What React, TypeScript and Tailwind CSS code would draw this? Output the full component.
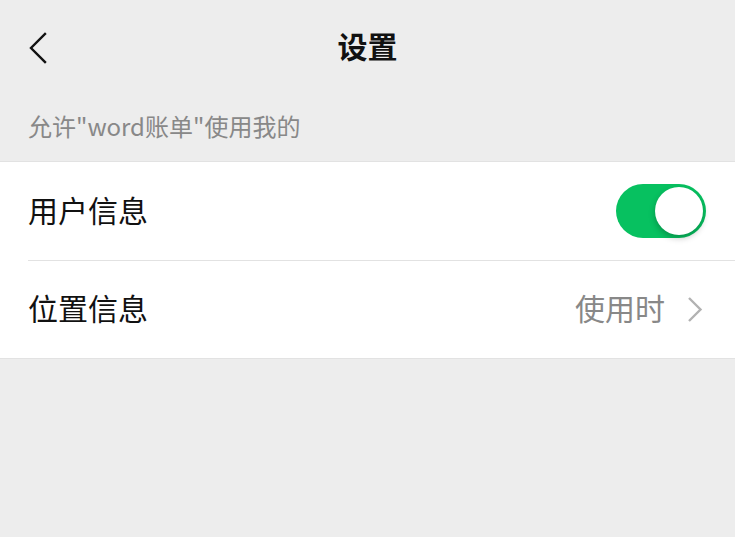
function Toggle() {
  return (
    <div className="relative h-[54px] w-[90px] rounded-full bg-[#07c160]">
      <div className="absolute right-[3px] top-[3px] h-[48px] w-[48px] rounded-full bg-white shadow-[0_3px_6px_rgba(0,0,0,0.25)]" />
    </div>
  );
}

export default function App() {
  return (
    <div className="min-h-[537px] w-full bg-[#ededed] font-['Noto_Sans_CJK_SC',sans-serif]">
      <header className="relative flex h-[96px] items-center justify-center">
        <svg className="absolute left-[28px] top-[32px]" width="22" height="32" viewBox="0 0 22 32" fill="none">
          <path d="M17 2 L3 16 L17 30" stroke="#111" strokeWidth="2.4" strokeLinecap="square" />
        </svg>
        <h1 className="mb-[5px] text-[30px] font-semibold text-[#111]">设置</h1>
      </header>

      <div className="flex h-[65px] items-center px-[28px] pb-[5px] text-[24px] text-[#888]">
        允许"word账单"使用我的
      </div>

      <div className="border-y border-[#e2e2e2] bg-white">
        <div className="flex h-[98px] items-center justify-between pl-[28px] pr-[29px]">
          <span className="mb-[4px] text-[30px] text-[#111]">用户信息</span>
          <Toggle />
        </div>
        <div className="ml-[28px] h-px bg-[#e2e2e2]" />
        <div className="flex h-[97px] items-center justify-between pl-[28px] pr-[32px]">
          <span className="mb-[4px] text-[30px] text-[#111]">位置信息</span>
          <div className="flex items-center gap-[22px]">
            <span className="mb-[4px] text-[30px] text-[#888]">使用时</span>
            <svg width="16" height="27" viewBox="0 0 16 27" fill="none">
              <path d="M2 2 L13.5 13.5 L2 25" stroke="#b2b2b2" strokeWidth="2.4" />
            </svg>
          </div>
        </div>
      </div>
    </div>
  );
}
